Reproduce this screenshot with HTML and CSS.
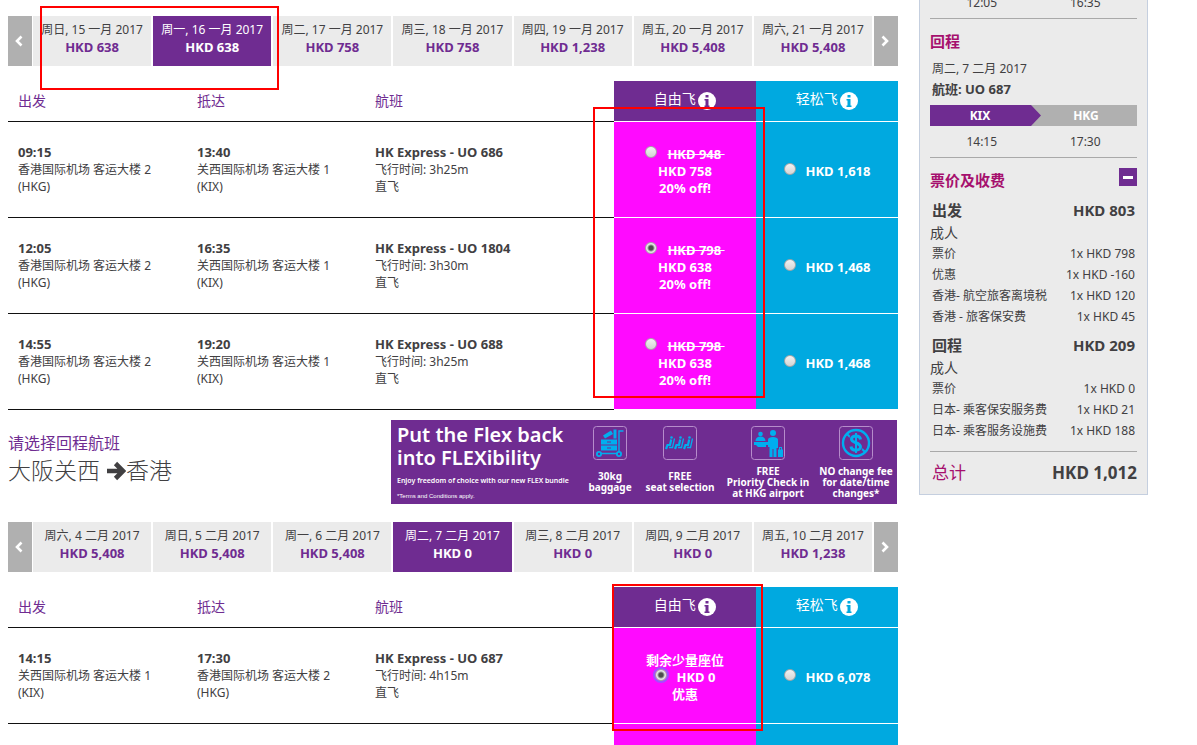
FILE: index.html
```html
<!DOCTYPE html>
<html lang="zh-CN">
<head>
    <meta charset="UTF-8">
    <meta name="viewport" content="width=device-width, initial-scale=1.0">
    <title>选择航班</title>
    <link rel="stylesheet" href="styles.css">
</head>
<body>

    <!-- Shared icons -->
    <svg class="icon-defs" width="0" height="0">
        <symbol id="chevron" viewBox="0 0 8 12"><path d="M6.500 1.500 2 6l4.500 4.500" fill="none" stroke="#fff" stroke-width="2.600"/></symbol>
        <symbol id="info" viewBox="0 0 18 18"><circle cx="9" cy="9" r="9" fill="#fff"/><path d="M7.500 3h3v2.500h-3zM6.500 7h4v6.500h1V15h-5v-1.500h1v-5h-1z" fill="currentColor"/></symbol>
    </svg>

    <div class="page">
        <main class="flights">

            <!-- Outbound -->
            <div class="dates">
                <button class="nav" aria-label="上一页"><svg><use href="#chevron"/></svg></button>
                <div class="days">
                    <button>周日, 15 一月 2017<b>HKD 638</b></button>
                    <button class="active">周一, 16 一月 2017<b>HKD 638</b></button>
                    <button>周二, 17 一月 2017<b>HKD 758</b></button>
                    <button>周三, 18 一月 2017<b>HKD 758</b></button>
                    <button>周四, 19 一月 2017<b>HKD 1,238</b></button>
                    <button>周五, 20 一月 2017<b>HKD 5,408</b></button>
                    <button>周六, 21 一月 2017<b>HKD 5,408</b></button>
                </div>
                <button class="nav next" aria-label="下一页"><svg><use href="#chevron"/></svg></button>
                <span class="mark mark-dates"></span>
            </div>

            <div class="table-wrap">
                <table class="fares">
                    <colgroup><col class="c-dep"><col class="c-arr"><col><col class="c-fare"><col class="c-fare"></colgroup>
                    <tr>
                        <th>出发</th>
                        <th>抵达</th>
                        <th>航班</th>
                        <th class="flex-head">自由飞 <svg><use href="#info"/></svg></th>
                        <th class="light-head">轻松飞 <svg><use href="#info"/></svg></th>
                    </tr>
                    <tr>
                        <td><b>09:15</b><br>香港国际机场 客运大楼 2<br>(HKG)</td>
                        <td><b>13:40</b><br>关西国际机场 客运大楼 1<br>(KIX)</td>
                        <td><b>HK Express - UO 686</b><br>飞行时间: 3h25m<br>直飞</td>
                        <td class="flex"><label><input type="radio" name="out"><s>HKD 948&nbsp;</s><br>HKD 758<br>20% off!</label></td>
                        <td class="light"><label><input type="radio" name="out">HKD 1,618</label></td>
                    </tr>
                    <tr>
                        <td><b>12:05</b><br>香港国际机场 客运大楼 2<br>(HKG)</td>
                        <td><b>16:35</b><br>关西国际机场 客运大楼 1<br>(KIX)</td>
                        <td><b>HK Express - UO 1804</b><br>飞行时间: 3h30m<br>直飞</td>
                        <td class="flex"><label><input type="radio" name="out" checked><s>HKD 798&nbsp;</s><br>HKD 638<br>20% off!</label></td>
                        <td class="light"><label><input type="radio" name="out">HKD 1,468</label></td>
                    </tr>
                    <tr>
                        <td><b>14:55</b><br>香港国际机场 客运大楼 2<br>(HKG)</td>
                        <td><b>19:20</b><br>关西国际机场 客运大楼 1<br>(KIX)</td>
                        <td><b>HK Express - UO 688</b><br>飞行时间: 3h25m<br>直飞</td>
                        <td class="flex"><label><input type="radio" name="out"><s>HKD 798&nbsp;</s><br>HKD 638<br>20% off!</label></td>
                        <td class="light"><label><input type="radio" name="out">HKD 1,468</label></td>
                    </tr>
                </table>
                <span class="mark mark-out"></span>
            </div>

            <!-- Return -->
            <div class="return-head">
                <div class="route">
                    <h2>请选择回程航班</h2>
                    <p>大阪关西 <svg viewBox="0 0 20 20"><path d="M1 10h15M9.500 2.500 17 10l-7.500 7.500" fill="none" stroke="#414042" stroke-width="4.600"/></svg>香港</p>
                </div>
                <div class="banner">
                    <div class="banner-copy">
                        <h3>Put the Flex back<br>into FLEXibility</h3>
                        <p>Enjoy freedom of choice with our new FLEX bundle</p>
                        <small>*Terms and Conditions apply.</small>
                    </div>
                    <div class="perk baggage">
                        <svg viewBox="0 0 34 34">
                            <rect x=".5" y=".5" width="33" height="33" rx="3" fill="none" stroke="#b68ccb"/>
                            <g fill="#00aeef">
                                <path d="M10 9.500 18 4.500l2 3.500-8 4.500zM20.500 3.500h3v9h-3zM8 13.500h16v5H8zM8 19.500h16v5H8z"/>
                                <circle cx="6" cy="28" r="3"/><circle cx="26" cy="28" r="3"/>
                            </g>
                            <path d="M6 27.500h20V5h4.500" fill="none" stroke="#00aeef" stroke-width="1.400"/>
                            <path d="M14 16h4M14 22h4" stroke="#6f2c91"/>
                            <circle cx="6" cy="28" r="1.200" fill="#6f2c91"/><circle cx="26" cy="28" r="1.200" fill="#6f2c91"/>
                        </svg>
                        <span>30kg<br>baggage</span>
                    </div>
                    <div class="perk">
                        <svg viewBox="0 0 34 34">
                            <rect x=".5" y=".5" width="33" height="33" rx="3" fill="none" stroke="#b68ccb"/>
                            <g id="seat" fill="none" stroke="#00aeef">
                                <circle cx="8.500" cy="11.500" r="1.300" fill="#00aeef" stroke="none"/>
                                <path d="M8.200 13.500 7 19H4.500L3 23" stroke-width="2.200"/>
                                <path d="M11.500 12.500 9.500 21.500H6" stroke-width="1.300"/>
                            </g>
                            <use href="#seat" x="9"/><use href="#seat" x="18"/>
                        </svg>
                        <span>FREE<br>seat selection</span>
                    </div>
                    <div class="perk">
                        <svg viewBox="0 0 34 34">
                            <rect x=".5" y=".5" width="33" height="33" rx="3" fill="none" stroke="#b68ccb"/>
                            <g fill="#00aeef">
                                <circle cx="9.500" cy="8" r="2.300"/>
                                <path d="M4.500 15c0-3 2-4.500 5-4.500s5 1.500 5 4.500zM3 16h14v3h-2v2H7l-2-2H3z"/>
                                <circle cx="22" cy="7" r="3"/>
                                <path d="M17 13.500c0-3.500 10-3.500 10 0V22h-1.500v9h-3v-8h-1v8h-3V15.500V21H17z"/>
                                <path d="M27 23.500h5V31h-5zM28 21h3v2.500h-1V22h-1v1.500h-1z"/>
                            </g>
                        </svg>
                        <span>FREE<br>Priority Check in<br>at HKG airport</span>
                    </div>
                    <div class="perk nofee">
                        <svg viewBox="0 0 34 34">
                            <rect x=".5" y=".5" width="33" height="33" rx="3" fill="none" stroke="#b68ccb"/>
                            <g fill="none" stroke="#00aeef">
                                <circle cx="17" cy="17" r="13" stroke-width="2.400"/>
                                <path d="M8 8l18 18" stroke-width="2"/>
                                <path d="M21.500 13.500c-.5-5-9-4.500-9-.5 0 4.500 9 3 9 8 0 4-9 4.500-9.500-.5M17 7v20" stroke="#6f2c91" stroke-width="4.600"/>
                                <path d="M21.500 13.500c-.5-5-9-4.500-9-.5 0 4.500 9 3 9 8 0 4-9 4.500-9.500-.5" stroke-width="3"/>
                                <path d="M17 7v20" stroke-width="2"/>
                            </g>
                        </svg>
                        <span>NO change fee<br>for date/time<br>changes*</span>
                    </div>
                </div>
            </div>

            <div class="dates">
                <button class="nav" aria-label="上一页"><svg><use href="#chevron"/></svg></button>
                <div class="days">
                    <button>周六, 4 二月 2017<b>HKD 5,408</b></button>
                    <button>周日, 5 二月 2017<b>HKD 5,408</b></button>
                    <button>周一, 6 二月 2017<b>HKD 5,408</b></button>
                    <button class="active">周二, 7 二月 2017<b>HKD 0</b></button>
                    <button>周三, 8 二月 2017<b>HKD 0</b></button>
                    <button>周四, 9 二月 2017<b>HKD 0</b></button>
                    <button>周五, 10 二月 2017<b>HKD 1,238</b></button>
                </div>
                <button class="nav next" aria-label="下一页"><svg><use href="#chevron"/></svg></button>
            </div>

            <div class="table-wrap">
                <table class="fares">
                    <colgroup><col class="c-dep"><col class="c-arr"><col><col class="c-fare"><col class="c-fare"></colgroup>
                    <tr>
                        <th>出发</th>
                        <th>抵达</th>
                        <th>航班</th>
                        <th class="flex-head">自由飞 <svg><use href="#info"/></svg></th>
                        <th class="light-head">轻松飞 <svg><use href="#info"/></svg></th>
                    </tr>
                    <tr>
                        <td><b>14:15</b><br>关西国际机场 客运大楼 1<br>(KIX)</td>
                        <td><b>17:30</b><br>香港国际机场 客运大楼 2<br>(HKG)</td>
                        <td><b>HK Express - UO 687</b><br>飞行时间: 4h15m<br>直飞</td>
                        <td class="flex"><label>剩余少量座位<br><input type="radio" name="ret" class="focused" checked>HKD 0<br>优惠</label></td>
                        <td class="light"><label><input type="radio" name="ret">HKD 6,078</label></td>
                    </tr>
                    <tr class="tail">
                        <td></td><td></td><td></td><td class="flex"></td><td class="light"></td>
                    </tr>
                </table>
                <span class="mark mark-ret"></span>
            </div>
        </main>

        <!-- Booking summary -->
        <aside class="summary">
            <div class="pair"><span>12:05</span><span>16:35</span></div>
            <hr>
            <h3>回程</h3>
            <p>周二, 7 二月 2017</p>
            <p class="flight-no">航班: UO 687</p>
            <div class="pair leg"><b>KIX</b><b>HKG</b></div>
            <div class="pair"><span>14:15</span><span>17:30</span></div>
            <hr>
            <div class="fees-head">
                <h3>票价及收费</h3>
                <button aria-label="收起"></button>
            </div>
            <table class="fees">
                <tr class="group"><th>出发</th><td>HKD 803</td></tr>
                <tr class="pax"><td colspan="2">成人</td></tr>
                <tr><td>票价</td><td>1x HKD 798</td></tr>
                <tr><td>优惠</td><td>1x HKD -160</td></tr>
                <tr><td>香港- 航空旅客离境税</td><td>1x HKD 120</td></tr>
                <tr><td>香港 - 旅客保安费</td><td>1x HKD 45</td></tr>
            </table>
            <table class="fees">
                <tr class="group"><th>回程</th><td>HKD 209</td></tr>
                <tr class="pax"><td colspan="2">成人</td></tr>
                <tr><td>票价</td><td>1x HKD 0</td></tr>
                <tr><td>日本- 乘客保安服务费</td><td>1x HKD 21</td></tr>
                <tr><td>日本- 乘客服务设施费</td><td>1x HKD 188</td></tr>
            </table>
            <hr>
            <div class="total"><span>总计</span><b>HKD 1,012</b></div>
        </aside>
    </div>

</body>
</html>
```

FILE: styles.css
```css
* {
    box-sizing: border-box;
}

body {
    margin: 0;
    font-family: "Noto Sans", "Noto Sans CJK SC", sans-serif;
    font-size: 12px;
    line-height: 17px;
    color: #414042;
    background: #fff;
}

h2, h3, p {
    margin: 0;
}

button {
    font: inherit;
    color: inherit;
    border: none;
    padding: 0;
    cursor: pointer;
}

.icon-defs {
    position: absolute;
}

.page {
    display: grid;
    grid-template-columns: minmax(0, 1fr) 229px;
    gap: 21px;
    align-items: start;
    padding: 0 49px 0 8px;
    overflow: hidden;
}

/* Date strip */
.dates {
    display: flex;
    gap: 1px;
    height: 50px;
    position: relative;
}

.flights > .dates:first-child {
    margin-top: 16px;
}

.nav {
    width: 24px;
    padding: 0 2px 2px 0;
    background: #b0b0b0;
}

.nav svg {
    width: 8px;
    height: 12px;
    vertical-align: middle;
}

.nav.next svg {
    transform: scaleX(-1);
}

.days {
    flex: 1;
    display: flex;
    gap: 2px;
    margin-right: 1px;
}

.days button {
    flex: 1 1 0;
    min-width: 0;
    background: #ebebeb;
    line-height: 18px;
    padding-bottom: 5px;
    white-space: nowrap;
}

.days b {
    display: block;
    font-size: 13px;
    line-height: 17px;
    color: #6f2c91;
}

.days .active {
    background: #6f2c91;
    color: #fff;
}

.days .active b {
    color: #fff;
}

/* Flight tables */
.table-wrap {
    position: relative;
    margin-top: 15px;
}

.fares {
    width: 100%;
    table-layout: fixed;
    border-spacing: 0;
}

.c-dep {
    width: 179px;
}

.c-arr {
    width: 178px;
}

.c-fare {
    width: 142px;
}

.fares th {
    height: 41px;
    padding: 0 10px 2px;
    border-bottom: 1px solid #111;
    text-align: left;
    font-size: 14px;
    font-weight: normal;
    color: #6f2c91;
}

.fares td {
    height: 96px;
    padding: 0 10px;
    border-bottom: 1px solid #111;
}

.fares b {
    font-size: 13px;
}

.fares th svg {
    width: 18px;
    height: 18px;
    margin-left: -1px;
    vertical-align: middle;
}

.fares .flex-head, .fares .light-head {
    border-color: #fff;
    color: #fff;
    text-align: center;
}

.flex-head {
    background: #6f2c91;
}

.light-head, .light {
    background: #00a9e0;
}

.flex-head svg {
    color: #6f2c91;
}

.light-head svg {
    color: #00a9e0;
}

.flex {
    background: #ff0aff;
}

.fares .flex, .fares .light {
    padding-top: 4px;
    border-color: #fff;
    color: #fff;
    text-align: center;
    font-size: 13px;
    font-weight: bold;
}

.fares .tail td {
    height: 21px;
    border: none;
}

input[type="radio"] {
    appearance: none;
    width: 12px;
    height: 12px;
    margin: 0 10px 0 0;
    border: 1px solid #a5a5a5;
    border-radius: 50%;
    background: linear-gradient(#f2f2f2, #d4d4d4);
    vertical-align: 1px;
}

input[type="radio"]:checked {
    background: radial-gradient(circle, #4d4d4d 2px, #e6e6e6 4px);
}

input.focused {
    box-shadow: 0 0 0 2px #a050ff;
}

/* Red highlight boxes */
.mark {
    position: absolute;
    border: 2px solid #f00;
    pointer-events: none;
}

.mark-dates {
    left: 32px;
    top: -10px;
    width: 239px;
    height: 84px;
}

.mark-out {
    right: 133px;
    top: 26px;
    width: 172px;
    height: 291px;
}

.mark-ret {
    right: 135px;
    top: -3px;
    width: 151px;
    height: 147px;
}

/* Return heading and banner */
.return-head {
    display: flex;
    justify-content: space-between;
    margin: 10px 1px 18px 0;
}

.route {
    padding-top: 12px;
}

.route h2 {
    font-size: 16px;
    font-weight: normal;
    line-height: 22px;
    color: #6f2c91;
}

.route p {
    font-size: 23px;
    font-weight: 300;
    line-height: 32px;
}

.route svg {
    width: 20px;
    height: 20px;
    vertical-align: -2px;
}

.banner {
    display: flex;
    width: 506px;
    height: 84px;
    padding-left: 6px;
    background: #6f2c91;
    color: #fff;
}

.banner-copy {
    flex: none;
    width: 187px;
    padding-top: 3px;
    white-space: nowrap;
}

.banner h3 {
    font-family: "Noto Sans", sans-serif;
    font-size: 20px;
    font-weight: 600;
    line-height: 23px;
}

.banner p {
    font-size: 7px;
    font-weight: 600;
    line-height: 24px;
}

.banner small {
    display: block;
    font-family: "Liberation Sans", sans-serif;
    font-size: 6px;
    line-height: 6px;
}

.perk {
    display: flex;
    flex: none;
    flex-direction: column;
    align-items: center;
    padding-top: 6px;
    width: 88px;
    font-size: 10px;
    font-weight: bold;
    line-height: 11px;
    text-align: center;
    white-space: nowrap;
}

.perk svg {
    width: 34px;
    height: 34px;
    flex: none;
}

.perk span {
    margin: auto 0;
}

.perk.baggage {
    width: 52px;
}

.perk.nofee {
    flex: 1;
    padding-left: 3px;
}

/* Summary panel */
.summary {
    margin-top: -6px;
    padding: 0 10px 10px;
    border: 1px solid #c5cfdf;
    border-top: none;
    background: #ebebeb;
}

.summary hr {
    height: 1px;
    margin: 7px 0 0;
    border: none;
    background: #a9a9a9;
}

.summary h3 {
    margin-top: 11px;
    font-size: 15px;
    line-height: 22px;
    color: #a6106e;
}

.summary h3 + p {
    margin-top: 6px;
}

.summary p {
    padding-left: 2px;
    line-height: 21px;
}

.summary .flight-no {
    font-size: 13px;
    font-weight: bold;
}

.pair {
    display: grid;
    grid-template-columns: 1fr 1fr;
    text-align: center;
}

.leg {
    grid-template-columns: 111px 1fr;
    margin: 5px 0 7px;
    line-height: 21px;
    color: #fff;
    background: #b0b0b0;
}

.leg b:first-child {
    padding-right: 11px;
    background: #6f2c91;
    clip-path: polygon(0 0, 91% 0, 100% 50%, 91% 100%, 0 100%);
}

.leg b:last-child {
    padding-right: 6px;
}

.fees-head {
    display: flex;
    justify-content: space-between;
    align-items: flex-start;
    margin: 10px 0 8px;
}

.fees-head h3 {
    margin: 1px 0 0;
}

.fees-head button {
    width: 18px;
    height: 18px;
    background: #6f2c91;
}

.fees-head button::before {
    content: "";
    display: block;
    width: 10px;
    height: 3px;
    margin: auto;
    background: #fff;
}

.fees {
    width: 100%;
    border-spacing: 0;
    margin-bottom: 7px;
}

.fees td, .fees th {
    height: 21px;
    padding: 0 2px;
    text-align: left;
}

.fees td + td, .fees th + td {
    text-align: right;
}

.fees .group > * {
    height: 23px;
    font-size: 15px;
    font-weight: bold;
}

.fees .pax td {
    padding: 0;
    font-size: 14px;
}

.fees + hr {
    margin-top: 10px;
}

.total {
    display: flex;
    justify-content: space-between;
    margin-top: 10px;
    padding-left: 2px;
    font-size: 17px;
    line-height: 22px;
}

.total span {
    color: #a6106e;
}
```
